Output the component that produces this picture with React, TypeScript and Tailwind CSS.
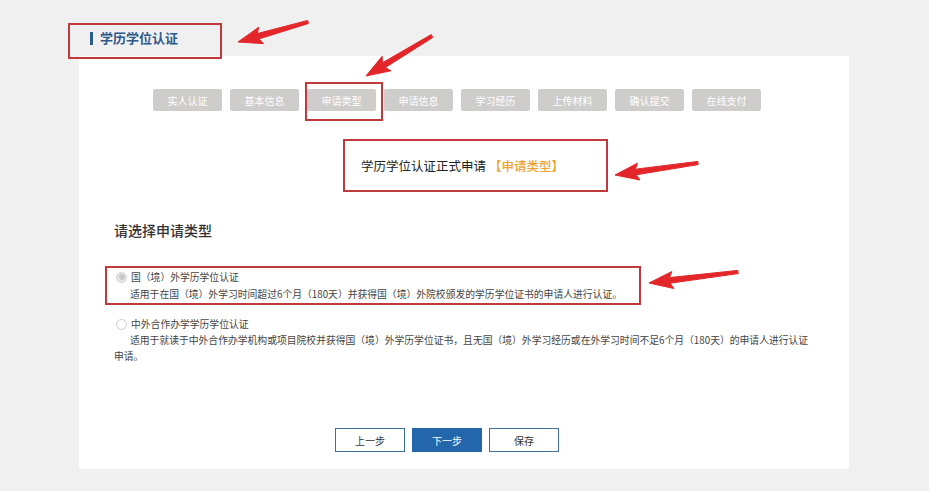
import React from "react";

const steps = ["实人认证", "基本信息", "申请类型", "申请信息", "学习经历", "上传材料", "确认提交", "在线支付"];

function arrowPoints(tx: number, ty: number, hx: number, hy: number) {
  const dx = hx - tx;
  const dy = hy - ty;
  const len = Math.sqrt(dx * dx + dy * dy);
  const ux = dx / len;
  const uy = dy / len;
  const nx = -uy;
  const ny = ux;
  const headLen = 21;
  const neckX = hx - ux * headLen;
  const neckY = hy - uy * headLen;
  const p = (x: number, y: number) => `${x.toFixed(1)},${y.toFixed(1)}`;
  return [
    p(tx + nx * 1.6, ty + ny * 1.6),
    p(neckX + nx * 2.8, neckY + ny * 2.8),
    p(neckX - ux * 3 + nx * 8.5, neckY - uy * 3 + ny * 8.5),
    p(hx, hy),
    p(neckX - ux * 3 - nx * 8.5, neckY - uy * 3 - ny * 8.5),
    p(neckX - nx * 2.8, neckY - ny * 2.8),
    p(tx - nx * 1.6, ty - ny * 1.6),
  ].join(" ");
}

const arrows: [number, number, number, number][] = [
  [308, 22, 238, 42],
  [432, 36, 366, 76],
  [698, 163, 615, 175],
  [738, 272, 649, 283],
];

function Radio({ checked }: { checked: boolean }) {
  return (
    <span
      className={
        checked
          ? "inline-flex h-[11px] w-[11px] shrink-0 items-center justify-center rounded-full border border-[#d4d4d4] bg-[#e8e8e8]"
          : "inline-block h-[11px] w-[11px] shrink-0 rounded-full border border-[#cfcfcf] bg-white"
      }
    >
      {checked && <span className="h-[6px] w-[6px] rounded-full bg-[#c8c8c8]" />}
    </span>
  );
}

export default function App() {
  return (
    <div
      className="relative h-[491px] w-[929px] overflow-hidden bg-[#f0f0f0] text-[#333]"
      style={{ fontFamily: '"Noto Sans CJK SC", "Noto Sans", "Liberation Sans", sans-serif' }}
    >
      {/* header */}
      <div className="flex h-[56px] items-start pl-[90px] pt-[29px]">
        <div className="flex items-center gap-[7px]">
          <span className="h-[13px] w-[3px] bg-[#2a5d8f]" />
          <span className="text-[13px] font-bold leading-[18px] text-[#2d5a8a]">学历学位认证</span>
        </div>
      </div>

      {/* panel */}
      <div className="ml-[79px] h-[413px] w-[770px] bg-white pl-[35px] pt-[33px]">
        <div className="flex gap-[8px] pl-[39px]">
          {steps.map((s) => (
            <div
              key={s}
              className="flex h-[22px] w-[69px] items-center justify-center rounded-[2px] bg-[#cfcccc] text-[10px] text-white"
            >
              {s}
            </div>
          ))}
        </div>

        <div className="mt-[45px] pl-[247px] text-[12.5px] leading-[20px] text-[#222]">
          学历学位认证正式申请<span className="ml-[3px] font-medium text-[#f0a22e]">【申请类型】</span>
        </div>

        <div className="mt-[44px] text-[14px] font-medium leading-[20px] text-[#333]">请选择申请类型</div>

        <div className="mt-[29px] text-[9.8px] leading-[16px] text-[#444]">
          <div className="flex items-center gap-[4px] pl-[2px]">
            <Radio checked />
            <span>国（境）外学历学位认证</span>
          </div>
          <div className="mt-[1px] indent-[16px]">
            适用于在国（境）外学习时间超过6个月（180天）并获得国（境）外院校颁发的学历学位证书的申请人进行认证。
          </div>
        </div>

        <div className="mt-[14px] text-[9.8px] leading-[16px] text-[#444]">
          <div className="flex items-center gap-[4px] pl-[2px]">
            <Radio checked={false} />
            <span>中外合作办学学历学位认证</span>
          </div>
          <div className="w-[720px] indent-[16px]">
            适用于就读于中外合作办学机构或项目院校并获得国（境）外学历学位证书，且无国（境）外学习经历或在外学习时间不足6个月（180天）的申请人进行认证
            <br />
            申请。
          </div>
        </div>

        <div className="mt-[64px] flex gap-[7px] pl-[221px]">
          <button className="flex h-[24px] w-[70px] items-center justify-center border border-[#3f6d9c] bg-white text-[10px] text-[#333]">
            上一步
          </button>
          <button className="flex h-[24px] w-[70px] items-center justify-center bg-[#2366ab] text-[10px] text-white">
            下一步
          </button>
          <button className="flex h-[24px] w-[70px] items-center justify-center border border-[#3f6d9c] bg-white text-[10px] text-[#333]">
            保存
          </button>
        </div>
      </div>

      {/* annotation boxes */}
      <div className="absolute left-[68px] top-[23px] h-[36px] w-[154px] border-2 border-[#c1393b]" />
      <div className="absolute left-[305px] top-[82px] h-[39px] w-[78px] border-2 border-[#c1393b]" />
      <div className="absolute left-[343px] top-[139px] h-[53px] w-[265px] border-2 border-[#c1393b]" />
      <div className="absolute left-[105px] top-[266px] h-[39px] w-[536px] border-2 border-[#c1393b]" />

      {/* annotation arrows */}
      <svg className="pointer-events-none absolute left-0 top-0" width="929" height="491">
        {arrows.map(([tx, ty, hx, hy], i) => (
          <polygon key={i} points={arrowPoints(tx, ty, hx, hy)} fill="#e3262a" strokeLinejoin="round" stroke="#e3262a" strokeWidth="1" />
        ))}
      </svg>
    </div>
  );
}
